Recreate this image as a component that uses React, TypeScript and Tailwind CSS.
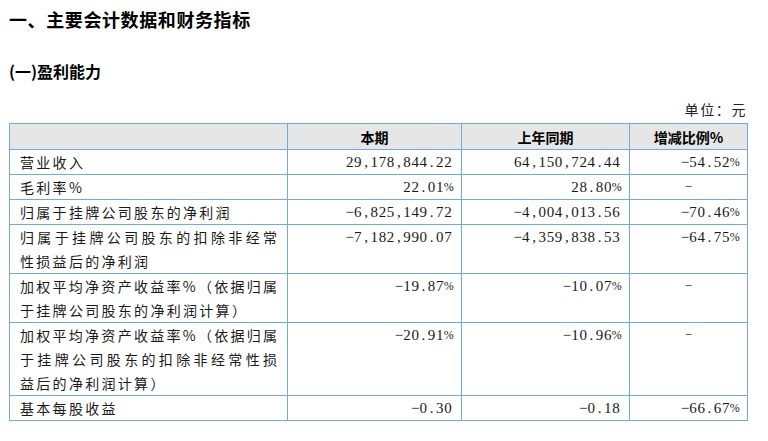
import React from 'react';

type Line = { t: string; j?: boolean };

type Row = {
  label: Line[];
  cur: string;
  prev: string;
  change: string;
};

const rows: Row[] = [
  { label: [{ t: '营业收入' }], cur: '29,178,844.22', prev: '64,150,724.44', change: '-54.52%' },
  { label: [{ t: '毛利率%' }], cur: '22.01%', prev: '28.80%', change: '-' },
  { label: [{ t: '归属于挂牌公司股东的净利润' }], cur: '-6,825,149.72', prev: '-4,004,013.56', change: '-70.46%' },
  {
    label: [{ t: '归属于挂牌公司股东的扣除非经常', j: true }, { t: '性损益后的净利润' }],
    cur: '-7,182,990.07',
    prev: '-4,359,838.53',
    change: '-64.75%',
  },
  {
    label: [{ t: '加权平均净资产收益率%（依据归属', j: true }, { t: '于挂牌公司股东的净利润计算）' }],
    cur: '-19.87%',
    prev: '-10.07%',
    change: '-',
  },
  {
    label: [
      { t: '加权平均净资产收益率%（依据归属', j: true },
      { t: '于挂牌公司股东的扣除非经常性损', j: true },
      { t: '益后的净利润计算）' },
    ],
    cur: '-20.91%',
    prev: '-10.96%',
    change: '-',
  },
  { label: [{ t: '基本每股收益' }], cur: '-0.30', prev: '-0.18', change: '-66.67%' },
];

// digits are set on a fixed half-width grid, like the Song face in the source document
const Num = ({ v }: { v: string }) => (
  <span className="inline-flex">
    {v.split('').map((c, i) => (
      <span
        key={i}
        className={c === '%' ? 'inline-block w-[8.2px] text-center text-[12px]' : 'inline-block w-[8.2px] text-center'}
      >
        {c === '-' ? '−' : c}
      </span>
    ))}
  </span>
);

const cellBorder = 'border border-[#72a9de]';

const App = () => {
  return (
    <div
      lang="zh-CN"
      className="w-[768px] h-[441px] bg-white text-black overflow-hidden"
      style={{ fontFamily: '"Noto Sans CJK SC", sans-serif' }}
    >
      <div className="ml-[9px] w-[738px] pt-[7px]">
        <h1 className="text-[18px] leading-[24px] font-bold tracking-[0.6px]">一、主要会计数据和财务指标</h1>
        <h2 className="mt-[29px] text-[16px] leading-[22px] font-bold">(一)盈利能力</h2>
        <p className="mt-[17px] mb-[4px] text-right text-[14px] leading-[20px] tracking-[1.6px] text-[#222]">单位：元</p>

        <table className="w-[738px] table-fixed border-collapse text-[14px] leading-[24px]">
          <colgroup>
            <col className="w-[278px]" />
            <col className="w-[174px]" />
            <col className="w-[168px]" />
            <col className="w-[118px]" />
          </colgroup>
          <thead>
            <tr className="h-[26px] bg-[#e6e6e6]">
              <th className={cellBorder}></th>
              <th className={`${cellBorder} text-center font-bold`}>本期</th>
              <th className={`${cellBorder} text-center font-bold`}>上年同期</th>
              <th className={`${cellBorder} text-center font-bold`}>增减比例%</th>
            </tr>
          </thead>
          <tbody>
            {rows.map((r, i) => (
              <tr key={i}>
                <td className={`${cellBorder} align-top px-[10px] tracking-[2.3px] text-[#1a1a1a]`}>
                  {r.label.map((l, k) => (
                    <div key={k} className={l.j ? 'text-justify [text-align-last:justify] tracking-normal' : ''}>
                      {l.t}
                    </div>
                  ))}
                </td>
                <td
                  className={`${cellBorder} align-top text-right pr-[9px] text-[15px] text-[#1a1a1a]`}
                  style={{ fontFamily: '"Liberation Serif", serif' }}
                >
                  <Num v={r.cur} />
                </td>
                <td
                  className={`${cellBorder} align-top text-right pr-[9px] text-[15px] text-[#1a1a1a]`}
                  style={{ fontFamily: '"Liberation Serif", serif' }}
                >
                  <Num v={r.prev} />
                </td>
                <td
                  className={
                    r.change === '-'
                      ? `${cellBorder} align-top text-center text-[13px] text-[#1a1a1a]`
                      : `${cellBorder} align-top text-right pr-[9px] text-[15px] text-[#1a1a1a]`
                  }
                  style={{ fontFamily: '"Liberation Serif", serif' }}
                >
                  {r.change === '-' ? '−' : <Num v={r.change} />}
                </td>
              </tr>
            ))}
          </tbody>
        </table>
      </div>
    </div>
  );
};

export default App;
